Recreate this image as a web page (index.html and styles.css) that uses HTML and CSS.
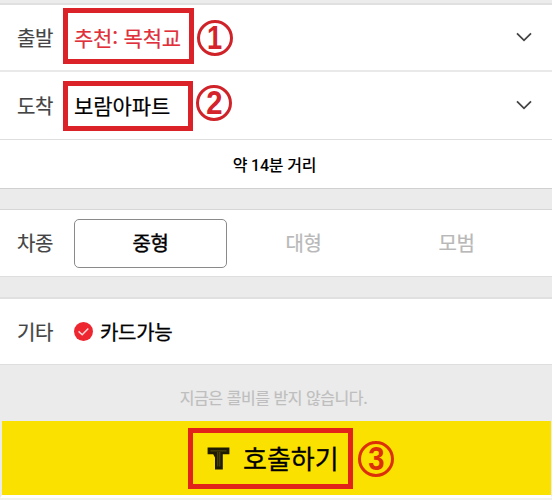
FILE: index.html
```html
<!DOCTYPE html>
<html lang="ko">
<head>
    <meta charset="UTF-8">
    <meta name="viewport" content="width=device-width, initial-scale=1.0">
    <title>택시 호출</title>
    <link rel="stylesheet" href="styles.css">
</head>
<body>
<div class="app">
    <div class="topline"></div>

    <div class="row start">
        <span class="label">출발</span>
        <span class="place red">추천: 목척교</span>
        <svg class="arrow" width="16" height="10" viewBox="0 0 16 10"><path d="M1 1.3L8 8.3L15 1.3"/></svg>
        <div class="mark mark1"></div>
        <div class="num num1"><span>1</span></div>
    </div>
    <div class="row end">
        <span class="label">도착</span>
        <span class="place">보람아파트</span>
        <svg class="arrow" width="16" height="10" viewBox="0 0 16 10"><path d="M1 1.3L8 8.3L15 1.3"/></svg>
        <div class="mark mark2"></div>
        <div class="num num2"><span>2</span></div>
    </div>
    <div class="distance"><span>약 14분 거리</span></div>

    <div class="gap"></div>

    <div class="row types">
        <span class="label">차종</span>
        <div class="type active">중형</div>
        <div class="type">대형</div>
        <div class="type">모범</div>
    </div>

    <div class="gap gap2"></div>

    <div class="row etc">
        <span class="label">기타</span>
        <svg class="check" width="19" height="19" viewBox="0 0 19 19">
            <circle cx="9.5" cy="9.5" r="9.5"/>
            <path d="M4.6 9.4L8.2 12.8L14.3 6.4"/>
        </svg>
        <span class="card">카드가능</span>
    </div>

    <div class="notice"><span>지금은 콜비를 받지 않습니다.</span></div>

    <div class="call">
        <svg class="logo" width="23" height="23" viewBox="0 0 23 23">
            <path class="logo-out" d="M0.6 0.6H22.4V7.2H15.8V22.4H8V10.5L6.2 7.2H0.6Z"/>
            <path class="logo-in" d="M3.4 3.9H19.6M10.8 5V19.5M12.8 5V19.5"/>
        </svg>
        <span class="call-text">호출하기</span>
        <div class="mark mark3"></div>
        <div class="num num3"><span>3</span></div>
    </div>
</div>
</body>
</html>
```
FILE: styles.css
```css
* {
    box-sizing: border-box;
}
body {
    margin: 0;
    background-color: #fff;
    font-family: "Noto Sans CJK KR", sans-serif;
    color: #000;
}
.app {
    width: 552px;
    height: 500px;
    overflow: hidden;
    background-color: #f1f1ee;
}
.topline {
    height: 5px;
    background-color: #ececec;
    border-bottom: 2px solid #e0e0e0;
}
.row {
    position: relative;
    display: flex;
    align-items: center;
    background-color: #fff;
    padding-left: 17px;
    line-height: 30px;
    white-space: nowrap;
}
.start {
    height: 67px;
    border-bottom: 2px solid #e9e9e9;
}
.end {
    height: 68px;
    border-bottom: 1px solid #dedede;
}
.label {
    width: 57px;
    font-size: 20px;
    color: #444;
    letter-spacing: -0.3px;
    -webkit-text-stroke: 0.2px #444;
}
.place {
    flex: 1;
    font-size: 21px;
    padding-bottom: 1px;
    letter-spacing: -0.1px;
    -webkit-text-stroke: 0.2px;
}
.red {
    color: #e0303a;
    letter-spacing: -0.2px;
}
.arrow {
    margin-right: 20px;
    margin-bottom: 1px;
    fill: none;
    stroke: #444;
    stroke-width: 1.8;
}
.distance {
    height: 49px;
    display: flex;
    align-items: center;
    justify-content: center;
    padding-right: 3px;
    background-color: #fff;
    border-bottom: 1px solid #d0d0d0;
    font-family: Roboto, "Noto Sans CJK KR", sans-serif;
    font-size: 16px;
    font-weight: 500;
    letter-spacing: -0.2px;
}
.gap {
    height: 21px;
    background-color: #ebebeb;
    border-bottom: 1px solid #d6d6d6;
}
.gap2 {
    height: 22px;
    border-bottom: 2px solid #e0e0e0;
}
.types {
    height: 67px;
    border-bottom: 1px solid #dedede;
}
.type {
    width: 153px;
    height: 49px;
    display: flex;
    align-items: center;
    justify-content: center;
    font-size: 20px;
    color: #b8b8b8;
    letter-spacing: -0.3px;
    -webkit-text-stroke: 0.2px;
}
.active {
    border: 1px solid #8a8a8a;
    border-radius: 5px;
    color: #000;
    -webkit-text-stroke: 0.4px;
}
.etc {
    height: 66px;
    border-bottom: 1px solid #dedede;
}
.check {
    margin-right: 7px;
    fill: #ee2630;
}
.check path {
    fill: none;
    stroke: #ffd9da;
    stroke-width: 1.5;
}
.card {
    font-size: 20px;
    letter-spacing: -0.3px;
    -webkit-text-stroke: 0.3px;
}
.notice {
    height: 56px;
    display: flex;
    align-items: center;
    justify-content: center;
    padding: 7px 5px 0 0;
    background-color: #ebebeb;
    font-size: 16px;
    letter-spacing: -0.45px;
    color: #bebebe;
    -webkit-text-stroke: 0.2px;
}
.call {
    position: relative;
    height: 77px;
    display: flex;
    align-items: center;
    padding-left: 205px;
    background-color: #fbe100;
    border-left: 2px solid #ebebeb;
    border-right: 1px solid #ebebeb;
    border-bottom: 3px solid #fff;
}
.logo-out {
    fill: #1c1a00;
}
.logo-in {
    fill: none;
    stroke: #6f6615;
    stroke-width: 0.7;
}
.call-text {
    margin-left: 13px;
    padding-bottom: 1px;
    font-size: 26px;
    line-height: 36px;
    -webkit-text-stroke: 0.3px;
}

/* red guide marks */
.mark {
    position: absolute;
    border: 5px solid #dc2229;
}
.mark1 {
    left: 63px;
    top: 3px;
    width: 131px;
    height: 56px;
}
.mark2 {
    left: 63px;
    top: 9px;
    width: 130px;
    height: 50px;
}
.mark3 {
    left: 186px;
    top: 7px;
    width: 165px;
    height: 61px;
    border-color: #e2231a;
}
.num {
    position: absolute;
    width: 36px;
    height: 36px;
    display: flex;
    align-items: center;
    justify-content: center;
    border: 3px solid #cf2329;
    border-radius: 50%;
    font-family: "Liberation Sans", Arial, sans-serif;
    font-size: 34px;
    font-weight: bold;
    line-height: 30px;
    color: #d4232a;
}
.num span {
    transform: translateY(-1px) scaleX(0.86);
}
.num1 {
    left: 197px;
    top: 15px;
}
.num1 span {
    transform: translate(-1px, -1px) scaleX(0.8);
}
.num2 {
    left: 196px;
    top: 13px;
}
.num3 {
    left: 356px;
    top: 20px;
    border-color: #dc3008;
    color: #dc3008;
}
```
